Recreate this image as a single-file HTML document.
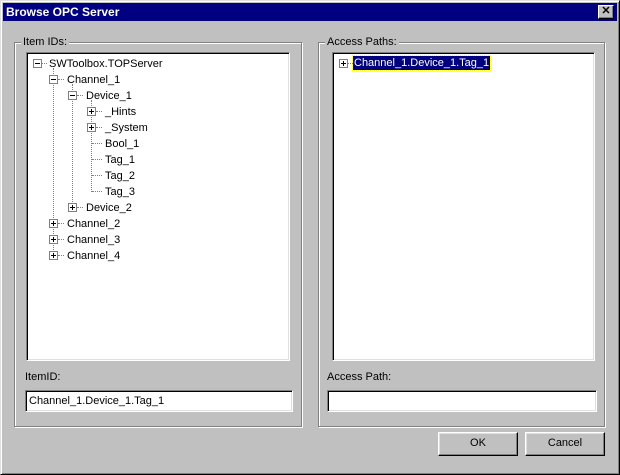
<!DOCTYPE html>
<html><head><style>
*{margin:0;padding:0;box-sizing:border-box}
body{width:620px;height:475px;background:#c0c0c0;font-family:"Liberation Sans",sans-serif;font-size:11px;color:#000;position:relative;overflow:hidden}
.abs{position:absolute}
.win{left:0;top:0;width:620px;height:475px;border:1px solid;border-color:#dfdfdf #000 #000 #dfdfdf;box-shadow:inset 1px 1px #fff,inset -1px -1px #808080}
.title{left:3px;top:3px;width:614px;height:18px;background:#000080;color:#fff;font-weight:bold;font-size:12px;line-height:18px;padding-left:3px}
.xbtn{left:598px;top:5px;width:16px;height:14px;background:#c0c0c0;border:1px solid;border-color:#fff #000 #000 #fff;box-shadow:inset -1px -1px #808080;font-size:11px;font-weight:bold;line-height:11px;text-align:center;color:#000}
.grp{border:1px solid #808080;box-shadow:1px 1px #fff,inset 1px 1px #fff}
.lbl{background:#c0c0c0;padding:0 2px;line-height:13px}
.sunk{background:#fff;border:1px solid;border-color:#808080 #fff #fff #808080;box-shadow:inset 1px 1px #000,inset -1px -1px #dfdfdf}
.t{position:absolute;line-height:13px;white-space:nowrap;margin-top:1px}
.bx{position:absolute;width:9px;height:9px;border:1px solid #808080;background:#fff}
.bx:before{content:"";position:absolute;left:1px;top:3px;width:5px;height:1px;background:#000}
.bx.p:after{content:"";position:absolute;left:3px;top:1px;width:1px;height:5px;background:#000}
.hl{position:absolute;height:1px;border-top:1px dotted #808080}
.vl{position:absolute;width:1px;border-left:1px dotted #808080}
.btn{background:#c0c0c0;border:1px solid;border-color:#fff #000 #000 #fff;box-shadow:inset -1px -1px #808080,inset 1px 1px #dfdfdf;text-align:center;line-height:21px}
.in{position:absolute;left:0;top:2px;width:100%;height:100%}
</style></head><body>
<div class="abs win"></div>
<div class="abs title">Browse OPC Server</div>
<div class="abs xbtn">✕</div>

<div class="abs grp" style="left:14px;top:42px;width:288px;height:385px"></div>
<div class="abs lbl" style="left:21px;top:36px">Item IDs:</div>
<div class="abs grp" style="left:318px;top:42px;width:287px;height:385px"></div>
<div class="abs lbl" style="left:325px;top:36px">Access Paths:</div>

<div class="abs sunk" style="left:26px;top:52px;width:264px;height:309px"><div class="in">
<div class="vl" style="left:26px;top:13px;height:188px"></div>
<div class="vl" style="left:45px;top:29px;height:124px"></div>
<div class="vl" style="left:64px;top:45px;height:92px"></div>
<div class="bx" style="left:6px;top:4px"></div><div class="hl" style="left:15px;top:8px;width:5px"></div><div class="t" style="left:22px;top:2px">SWToolbox.TOPServer</div>
<div class="bx" style="left:22px;top:20px"></div><div class="hl" style="left:31px;top:24px;width:6px"></div><div class="t" style="left:40px;top:18px">Channel_1</div>
<div class="bx" style="left:41px;top:36px"></div><div class="hl" style="left:50px;top:40px;width:6px"></div><div class="t" style="left:59px;top:34px">Device_1</div>
<div class="bx p" style="left:60px;top:52px"></div><div class="hl" style="left:69px;top:56px;width:6px"></div><div class="t" style="left:78px;top:50px">_Hints</div>
<div class="bx p" style="left:60px;top:68px"></div><div class="hl" style="left:69px;top:72px;width:6px"></div><div class="t" style="left:78px;top:66px">_System</div>
<div class="hl" style="left:65px;top:88px;width:10px"></div><div class="t" style="left:78px;top:82px">Bool_1</div>
<div class="hl" style="left:65px;top:104px;width:10px"></div><div class="t" style="left:78px;top:98px">Tag_1</div>
<div class="hl" style="left:65px;top:120px;width:10px"></div><div class="t" style="left:78px;top:114px">Tag_2</div>
<div class="hl" style="left:65px;top:136px;width:10px"></div><div class="t" style="left:78px;top:130px">Tag_3</div>
<div class="bx p" style="left:41px;top:148px"></div><div class="hl" style="left:50px;top:152px;width:6px"></div><div class="t" style="left:59px;top:146px">Device_2</div>
<div class="bx p" style="left:22px;top:164px"></div><div class="hl" style="left:31px;top:168px;width:6px"></div><div class="t" style="left:40px;top:162px">Channel_2</div>
<div class="bx p" style="left:22px;top:180px"></div><div class="hl" style="left:31px;top:184px;width:6px"></div><div class="t" style="left:40px;top:178px">Channel_3</div>
<div class="bx p" style="left:22px;top:196px"></div><div class="hl" style="left:31px;top:200px;width:6px"></div><div class="t" style="left:40px;top:194px">Channel_4</div>
</div></div>

<div class="abs sunk" style="left:332px;top:52px;width:263px;height:309px"><div class="in">
<div class="bx p" style="left:6px;top:4px"></div><div class="hl" style="left:15px;top:8px;width:5px"></div>
<div class="t" style="left:20px;top:0px;background:#000080;color:#fff;padding:0 1px;outline:1px dotted #ff0;line-height:14px">Channel_1.Device_1.Tag_1</div>
</div></div>

<div class="abs" style="left:25px;top:371px;line-height:13px">ItemID:</div>
<div class="abs sunk" style="left:25px;top:390px;width:268px;height:22px;line-height:20px;padding-left:3px">Channel_1.Device_1.Tag_1</div>
<div class="abs" style="left:327px;top:371px;line-height:13px">Access Path:</div>
<div class="abs sunk" style="left:327px;top:390px;width:270px;height:22px"></div>

<div class="abs btn" style="left:438px;top:432px;width:80px;height:24px">OK</div>
<div class="abs btn" style="left:525px;top:432px;width:80px;height:24px">Cancel</div>
</body></html>
